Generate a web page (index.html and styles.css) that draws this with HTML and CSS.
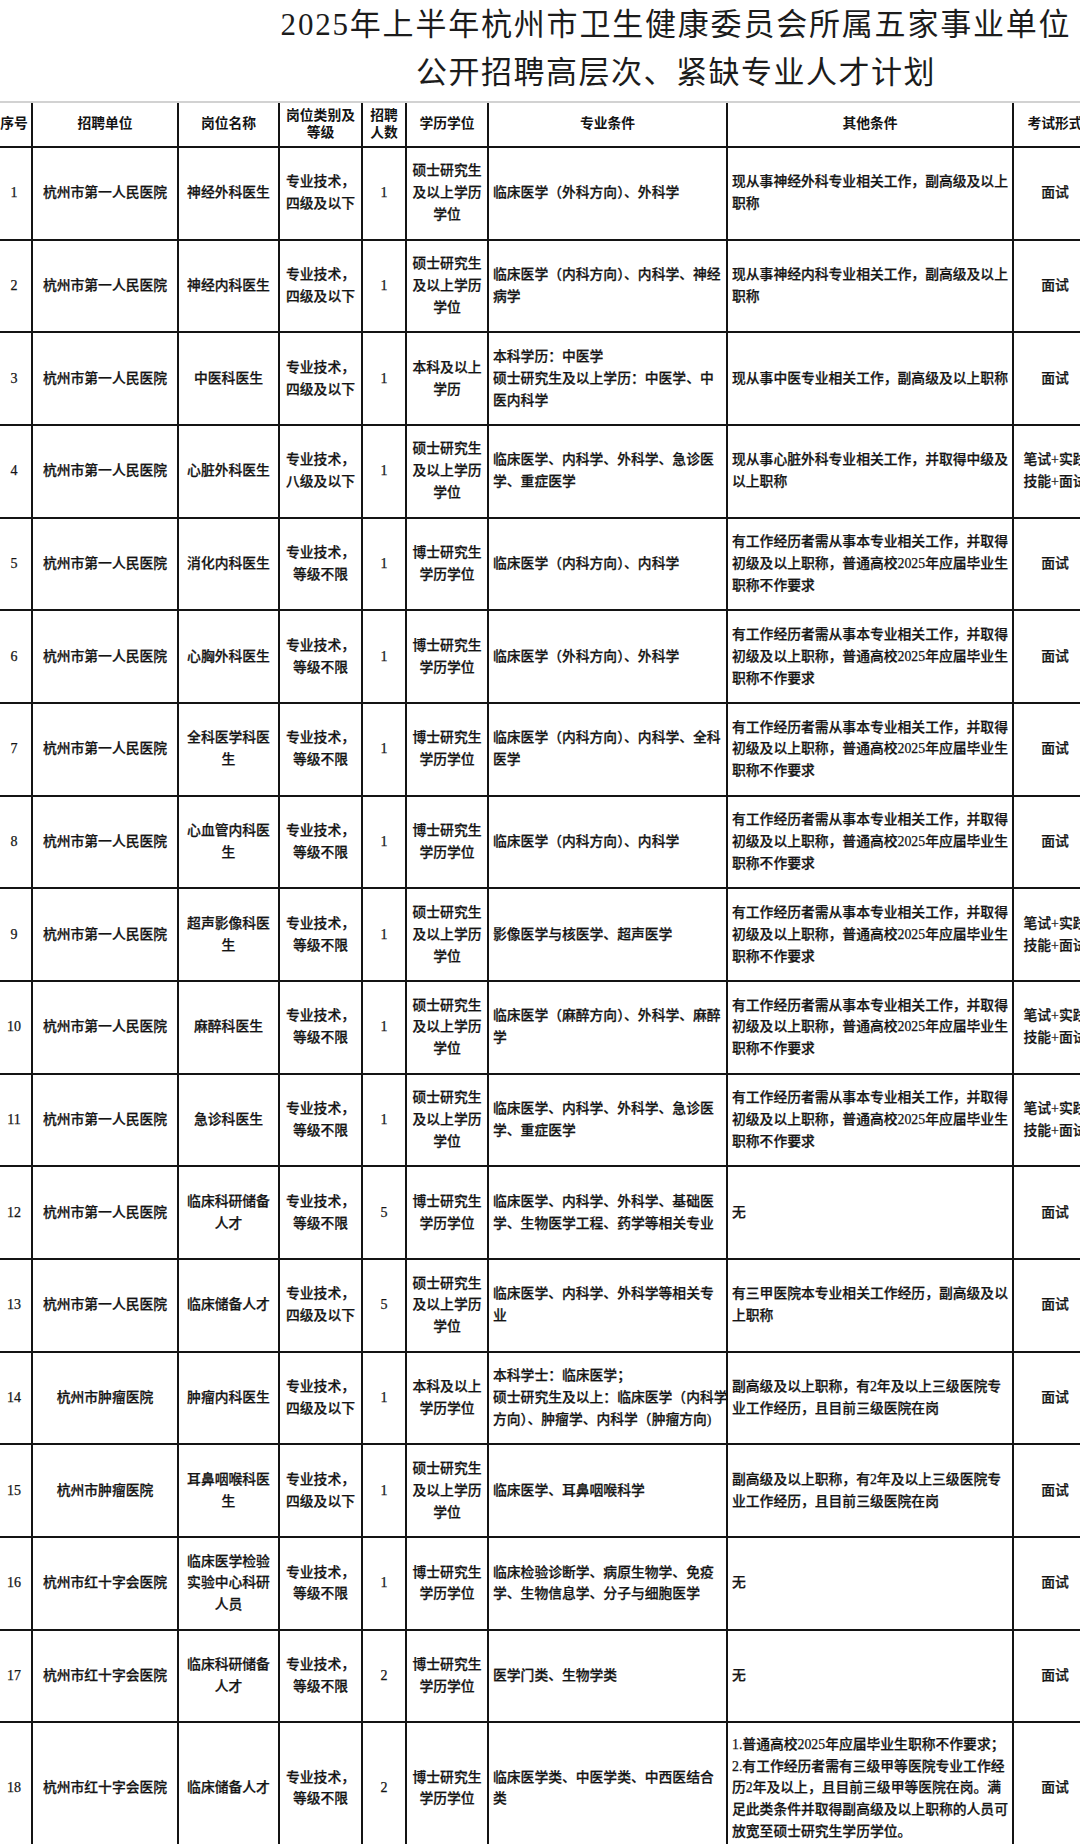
FILE: index.html
```html
<!DOCTYPE html>
<html lang="zh-CN">
<head>
<meta charset="utf-8">
<title>2025年上半年杭州市卫生健康委员会所属五家事业单位公开招聘高层次、紧缺专业人才计划</title>
<link rel="stylesheet" href="styles.css">
</head>
<body>
<div class="page">
  <header class="title">
    <h1 class="title-line title-line--first">2025年上半年杭州市卫生健康委员会所属五家事业单位</h1>
    <h1 class="title-line title-line--second">公开招聘高层次、紧缺专业人才计划</h1>
  </header>

  <div class="sheet">
    <div class="cell head head--tight">序号</div>
    <div class="cell head">招聘单位</div>
    <div class="cell head">岗位名称</div>
    <div class="cell head">岗位类别及等级</div>
    <div class="cell head">招聘人数</div>
    <div class="cell head">学历学位</div>
    <div class="cell head">专业条件</div>
    <div class="cell head">其他条件</div>
    <div class="cell head head--tight">考试形式</div>

    <div class="cell num">1</div>
    <div class="cell">杭州市第一人民医院</div>
    <div class="cell">神经外科医生</div>
    <div class="cell">专业技术，四级及以下</div>
    <div class="cell num">1</div>
    <div class="cell">硕士研究生及以上学历学位</div>
    <div class="cell left">临床医学（外科方向）、外科学</div>
    <div class="cell left">现从事神经外科专业相关工作，副高级及以上职称</div>
    <div class="cell">面试</div>

    <div class="cell num">2</div>
    <div class="cell">杭州市第一人民医院</div>
    <div class="cell">神经内科医生</div>
    <div class="cell">专业技术，四级及以下</div>
    <div class="cell num">1</div>
    <div class="cell">硕士研究生及以上学历学位</div>
    <div class="cell left">临床医学（内科方向）、内科学、神经病学</div>
    <div class="cell left">现从事神经内科专业相关工作，副高级及以上职称</div>
    <div class="cell">面试</div>

    <div class="cell num">3</div>
    <div class="cell">杭州市第一人民医院</div>
    <div class="cell">中医科医生</div>
    <div class="cell">专业技术，四级及以下</div>
    <div class="cell num">1</div>
    <div class="cell">本科及以上学历</div>
    <div class="cell left">本科学历：中医学<br>硕士研究生及以上学历：中医学、中医内科学</div>
    <div class="cell left">现从事中医专业相关工作，副高级及以上职称</div>
    <div class="cell">面试</div>

    <div class="cell num">4</div>
    <div class="cell">杭州市第一人民医院</div>
    <div class="cell">心脏外科医生</div>
    <div class="cell">专业技术，八级及以下</div>
    <div class="cell num">1</div>
    <div class="cell">硕士研究生及以上学历学位</div>
    <div class="cell left">临床医学、内科学、外科学、急诊医学、重症医学</div>
    <div class="cell left">现从事心脏外科专业相关工作，并取得中级及以上职称</div>
    <div class="cell exam">笔试+实践技能+面试</div>

    <div class="cell num">5</div>
    <div class="cell">杭州市第一人民医院</div>
    <div class="cell">消化内科医生</div>
    <div class="cell">专业技术，等级不限</div>
    <div class="cell num">1</div>
    <div class="cell">博士研究生学历学位</div>
    <div class="cell left">临床医学（内科方向）、内科学</div>
    <div class="cell left">有工作经历者需从事本专业相关工作，并取得初级及以上职称，普通高校2025年应届毕业生职称不作要求</div>
    <div class="cell">面试</div>

    <div class="cell num">6</div>
    <div class="cell">杭州市第一人民医院</div>
    <div class="cell">心胸外科医生</div>
    <div class="cell">专业技术，等级不限</div>
    <div class="cell num">1</div>
    <div class="cell">博士研究生学历学位</div>
    <div class="cell left">临床医学（外科方向）、外科学</div>
    <div class="cell left">有工作经历者需从事本专业相关工作，并取得初级及以上职称，普通高校2025年应届毕业生职称不作要求</div>
    <div class="cell">面试</div>

    <div class="cell num">7</div>
    <div class="cell">杭州市第一人民医院</div>
    <div class="cell">全科医学科医生</div>
    <div class="cell">专业技术，等级不限</div>
    <div class="cell num">1</div>
    <div class="cell">博士研究生学历学位</div>
    <div class="cell left">临床医学（内科方向）、内科学、全科医学</div>
    <div class="cell left">有工作经历者需从事本专业相关工作，并取得初级及以上职称，普通高校2025年应届毕业生职称不作要求</div>
    <div class="cell">面试</div>

    <div class="cell num">8</div>
    <div class="cell">杭州市第一人民医院</div>
    <div class="cell">心血管内科医生</div>
    <div class="cell">专业技术，等级不限</div>
    <div class="cell num">1</div>
    <div class="cell">博士研究生学历学位</div>
    <div class="cell left">临床医学（内科方向）、内科学</div>
    <div class="cell left">有工作经历者需从事本专业相关工作，并取得初级及以上职称，普通高校2025年应届毕业生职称不作要求</div>
    <div class="cell">面试</div>

    <div class="cell num">9</div>
    <div class="cell">杭州市第一人民医院</div>
    <div class="cell">超声影像科医生</div>
    <div class="cell">专业技术，等级不限</div>
    <div class="cell num">1</div>
    <div class="cell">硕士研究生及以上学历学位</div>
    <div class="cell left">影像医学与核医学、超声医学</div>
    <div class="cell left">有工作经历者需从事本专业相关工作，并取得初级及以上职称，普通高校2025年应届毕业生职称不作要求</div>
    <div class="cell exam">笔试+实践技能+面试</div>

    <div class="cell num">10</div>
    <div class="cell">杭州市第一人民医院</div>
    <div class="cell">麻醉科医生</div>
    <div class="cell">专业技术，等级不限</div>
    <div class="cell num">1</div>
    <div class="cell">硕士研究生及以上学历学位</div>
    <div class="cell left">临床医学（麻醉方向）、外科学、麻醉学</div>
    <div class="cell left">有工作经历者需从事本专业相关工作，并取得初级及以上职称，普通高校2025年应届毕业生职称不作要求</div>
    <div class="cell exam">笔试+实践技能+面试</div>

    <div class="cell num">11</div>
    <div class="cell">杭州市第一人民医院</div>
    <div class="cell">急诊科医生</div>
    <div class="cell">专业技术，等级不限</div>
    <div class="cell num">1</div>
    <div class="cell">硕士研究生及以上学历学位</div>
    <div class="cell left">临床医学、内科学、外科学、急诊医学、重症医学</div>
    <div class="cell left">有工作经历者需从事本专业相关工作，并取得初级及以上职称，普通高校2025年应届毕业生职称不作要求</div>
    <div class="cell exam">笔试+实践技能+面试</div>

    <div class="cell num">12</div>
    <div class="cell">杭州市第一人民医院</div>
    <div class="cell">临床科研储备人才</div>
    <div class="cell">专业技术，等级不限</div>
    <div class="cell num">5</div>
    <div class="cell">博士研究生学历学位</div>
    <div class="cell left">临床医学、内科学、外科学、基础医学、生物医学工程、药学等相关专业</div>
    <div class="cell left">无</div>
    <div class="cell">面试</div>

    <div class="cell num">13</div>
    <div class="cell">杭州市第一人民医院</div>
    <div class="cell">临床储备人才</div>
    <div class="cell">专业技术，四级及以下</div>
    <div class="cell num">5</div>
    <div class="cell">硕士研究生及以上学历学位</div>
    <div class="cell left">临床医学、内科学、外科学等相关专业</div>
    <div class="cell left">有三甲医院本专业相关工作经历，副高级及以上职称</div>
    <div class="cell">面试</div>

    <div class="cell num">14</div>
    <div class="cell">杭州市肿瘤医院</div>
    <div class="cell">肿瘤内科医生</div>
    <div class="cell">专业技术，四级及以下</div>
    <div class="cell num">1</div>
    <div class="cell">本科及以上学历学位</div>
    <div class="cell left nowrap">本科学士：临床医学；<br>硕士研究生及以上：临床医学（内科学<br>方向）、肿瘤学、内科学（肿瘤方向)</div>
    <div class="cell left">副高级及以上职称，有2年及以上三级医院专业工作经历，且目前三级医院在岗</div>
    <div class="cell">面试</div>

    <div class="cell num">15</div>
    <div class="cell">杭州市肿瘤医院</div>
    <div class="cell">耳鼻咽喉科医生</div>
    <div class="cell">专业技术，四级及以下</div>
    <div class="cell num">1</div>
    <div class="cell">硕士研究生及以上学历学位</div>
    <div class="cell left">临床医学、耳鼻咽喉科学</div>
    <div class="cell left">副高级及以上职称，有2年及以上三级医院专业工作经历，且目前三级医院在岗</div>
    <div class="cell">面试</div>

    <div class="cell num">16</div>
    <div class="cell">杭州市红十字会医院</div>
    <div class="cell">临床医学检验实验中心科研人员</div>
    <div class="cell">专业技术，等级不限</div>
    <div class="cell num">1</div>
    <div class="cell">博士研究生学历学位</div>
    <div class="cell left">临床检验诊断学、病原生物学、免疫学、生物信息学、分子与细胞医学</div>
    <div class="cell left">无</div>
    <div class="cell">面试</div>

    <div class="cell num">17</div>
    <div class="cell">杭州市红十字会医院</div>
    <div class="cell">临床科研储备人才</div>
    <div class="cell">专业技术，等级不限</div>
    <div class="cell num">2</div>
    <div class="cell">博士研究生学历学位</div>
    <div class="cell left">医学门类、生物学类</div>
    <div class="cell left">无</div>
    <div class="cell">面试</div>

    <div class="cell num">18</div>
    <div class="cell">杭州市红十字会医院</div>
    <div class="cell">临床储备人才</div>
    <div class="cell">专业技术，等级不限</div>
    <div class="cell num">2</div>
    <div class="cell">博士研究生学历学位</div>
    <div class="cell left">临床医学类、中医学类、中西医结合类</div>
    <div class="cell left">1.普通高校2025年应届毕业生职称不作要求；<br>2.有工作经历者需有三级甲等医院专业工作经历2年及以上，且目前三级甲等医院在岗。满足此类条件并取得副高级及以上职称的人员可放宽至硕士研究生学历学位。</div>
    <div class="cell">面试</div>
  </div>
</div>
</body>
</html>
```

FILE: styles.css
```css
html, body {
  margin: 0;
  padding: 0;
  background: #ffffff;
  overflow: hidden;
}

body {
  width: 1080px;
  height: 1844px;
  font-family: "Liberation Serif", "Noto Sans CJK SC", serif;
  color: #141414;
}

.page {
  width: 1352px;
}

.title {
  height: 101px;
  padding-top: 3px;
  box-sizing: border-box;
  text-align: center;
  color: #1c1c1c;
}

.title-line {
  margin: 0;
  font-weight: 400;
  font-size: 31px;
  line-height: 44px;
  white-space: nowrap;
}

.title-line--first {
  letter-spacing: 1.8px;
}

.title-line--second {
  margin-top: 4px;
  letter-spacing: 1.5px;
}

.sheet {
  display: grid;
  grid-template-columns: 34px 144px 99px 81px 42px 80px 237px 284px 82px;
  grid-template-rows: 43px repeat(17, 90.68px) 130px;
  gap: 2px;
  width: max-content;
  margin-left: -5px;
  padding: 0 2px;
  background: #141414;
  border-top: 2px solid #d2d2d2;
}

.cell {
  background: #ffffff;
  display: flex;
  align-items: center;
  justify-content: center;
  text-align: center;
  padding: 0 5px;
  font-size: 13.8px;
  font-weight: 500;
  line-height: 21.9px;
  min-width: 0;
  -webkit-text-stroke: 0.25px currentColor;
}

.head {
  font-weight: 700;
  line-height: 16.2px;
  padding: 0 4px;
  -webkit-text-stroke: 0;
}

.head--tight {
  padding: 0;
  white-space: nowrap;
}

.num {
  font-size: 14px;
  padding: 0;
}

.left {
  justify-content: flex-start;
  text-align: left;
  padding: 0 2px 0 4px;
}

.nowrap {
  white-space: nowrap;
  position: relative;
  z-index: 1;
}

.exam {
  padding: 0 8px;
}
```
